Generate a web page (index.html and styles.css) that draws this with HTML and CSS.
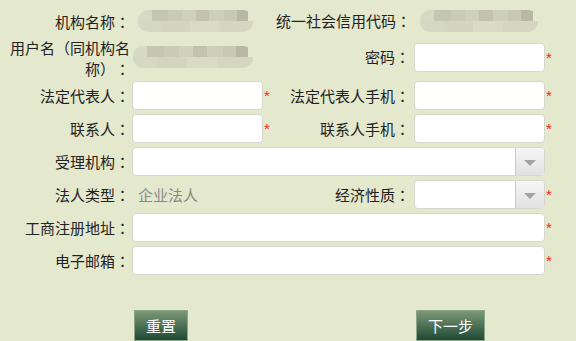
FILE: index.html
```html
<!DOCTYPE html>
<html lang="zh-CN">
<head>
    <meta charset="UTF-8">
    <title>机构注册</title>
    <link rel="stylesheet" href="styles.css">
</head>
<body>
    <div class="form">
        <div class="label">机构名称<span class="p" lang="zh-TW">：</span></div>
        <div class="cell span2"><div class="mosaic"></div></div>
        <div class="label right">统一社会信用代码<span class="p" lang="zh-TW">：</span></div>
        <div class="cell span2"><div class="mosaic short"></div></div>

        <div class="label two">用户名<span class="p" lang="zh-TW">（</span>同机构名称）<span class="p" lang="zh-TW">：</span></div>
        <div class="cell span2"><div class="mosaic wide"></div></div>
        <div class="label right">密码<span class="p" lang="zh-TW">：</span></div>
        <div class="cell"><input class="field" type="password"></div>
        <div class="star">*</div>

        <div class="label">法定代表人<span class="p" lang="zh-TW">：</span></div>
        <div class="cell"><input class="field" type="text"></div>
        <div class="star">*</div>
        <div class="label right">法定代表人手机<span class="p" lang="zh-TW">：</span></div>
        <div class="cell"><input class="field" type="text"></div>
        <div class="star">*</div>

        <div class="label">联系人<span class="p" lang="zh-TW">：</span></div>
        <div class="cell"><input class="field" type="text"></div>
        <div class="star">*</div>
        <div class="label right">联系人手机<span class="p" lang="zh-TW">：</span></div>
        <div class="cell"><input class="field" type="text"></div>
        <div class="star">*</div>

        <div class="label">受理机构<span class="p" lang="zh-TW">：</span></div>
        <div class="cell span4"><div class="field select"><span class="arrow"></span></div></div>
        <div class="star"></div>

        <div class="label">法人类型<span class="p" lang="zh-TW">：</span></div>
        <div class="cell span2 value">企业法人</div>
        <div class="label right">经济性质<span class="p" lang="zh-TW">：</span></div>
        <div class="cell"><div class="field select"><span class="arrow"></span></div></div>
        <div class="star">*</div>

        <div class="label">工商注册地址<span class="p" lang="zh-TW">：</span></div>
        <div class="cell span4"><input class="field" type="text"></div>
        <div class="star">*</div>

        <div class="label">电子邮箱<span class="p" lang="zh-TW">：</span></div>
        <div class="cell span4"><input class="field" type="text"></div>
        <div class="star">*</div>
    </div>

    <div class="buttons">
        <div></div>
        <div class="cell"><button class="btn">重置</button></div>
        <div></div>
        <div></div>
        <div class="cell"><button class="btn">下一步</button></div>
    </div>
</body>
</html>
```

FILE: styles.css
```css
* { margin: 0; padding: 0; box-sizing: border-box; }
body { background-color: #e4e8cd; color: #222; font-family: "Noto Sans CJK SC", "Liberation Sans", sans-serif; font-size: 15px; line-height: 20px; overflow: hidden; }

.form, .buttons { display: grid; grid-template-columns: 124px 131px 13px 138px 131px 1fr; padding-left: 8px; }
.form { grid-template-rows: 29px 44px repeat(6, 33px); padding-top: 6px; align-items: center; }
.form > .label:first-child { padding-top: 2px; }
.buttons { margin-top: 33px; }

.label { text-align: right; padding-right: 2px; }
.label.two { line-height: 21px; padding-top: 2px; }
.label.right { padding-right: 4px; white-space: nowrap; }
.p { display: inline-block; font-family: "Noto Sans CJK TC", "Noto Sans CJK SC", sans-serif; }
.span2 { grid-column: span 2; }
.span4 { grid-column: span 4; }
.value { color: #888; padding-left: 6px; }

.field { display: block; width: 100%; height: 29px; border: 1px solid #d6d8d0; border-radius: 4px; background: #fff; outline: none; }
.select { position: relative; }
.arrow { position: absolute; top: 0; right: 0; bottom: 0; width: 29px; border-left: 1px solid #c8c8c8; border-radius: 0 3px 3px 0; background: linear-gradient(#f6f6f6, #e1e1e1); }
.arrow::after { content: ""; position: absolute; left: 8px; top: 12px; border-left: 6px solid transparent; border-right: 6px solid transparent; border-top: 6px solid #a3a3a3; }

.star { color: #f22; font-family: "Liberation Sans", sans-serif; font-size: 15px; line-height: 29px; padding-left: 1px; }

.mosaic { width: 115px; height: 22px; margin-left: 6px; border-radius: 10px;
    background:
        linear-gradient(to right, #d7dac2 0 12%, #c4c6b0 12% 26%, #cacbb5 26% 38%, #cfd1ba 38% 50%, #c3c3ad 50% 62%, #cdcfb8 62% 75%, #c8c9b3 75% 86%, #b8b8a5 86% 96%, transparent 96%) top / 100% 50% no-repeat,
        linear-gradient(to right, #d6d9c1 0 20%, #d3d5be 20% 45%, #d9dbc4 45% 70%, #d4d6bf 70% 100%) bottom / 100% 50% no-repeat;
}
.mosaic.wide { width: 120px; margin-left: 1px; }
.mosaic.short { width: 118px; margin-left: 6px; }

.btn { height: 31px; padding: 0 11px; border: 1px solid #8da686; background: linear-gradient(#7c9875, #1f4a36); color: #fff; font-family: "Noto Sans CJK SC", sans-serif; font-size: 15px; margin-left: 2px; cursor: pointer; }
```
